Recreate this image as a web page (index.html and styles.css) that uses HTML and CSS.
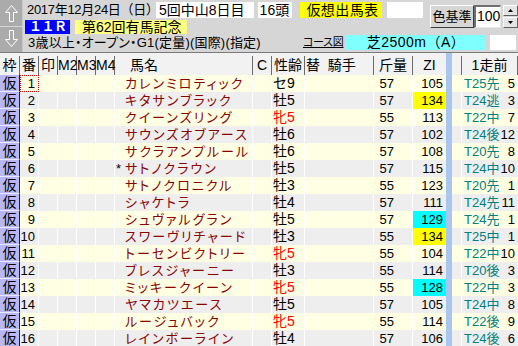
FILE: index.html
```html
<!DOCTYPE html>
<html lang="ja">
<head>
<meta charset="utf-8">
<link rel="stylesheet" href="styles.css">
</head>
<body>
<div class="top">
  <div class="arrows">
    <div class="arrow-btn"><svg width="22" height="26" viewBox="0 0 22 26"><path d="M11.5 5.5 L5.5 12.5 L9.5 12.5 L9.5 21.5 L13.5 21.5 L13.5 12.5 L17.5 12.5 Z" fill="none" stroke="#fff" stroke-width="1"/></svg></div>
    <div class="arrow-btn"><svg width="22" height="25" viewBox="0 0 22 25"><path d="M11.5 19.5 L5.5 12.5 L9.5 12.5 L9.5 3.5 L13.5 3.5 L13.5 12.5 L17.5 12.5 Z" fill="none" stroke="#fff" stroke-width="1"/></svg></div>
  </div>
  <div class="info">
    <div class="upper">
      <div class="rows12">
        <div class="row1">
          <span class="date">2017年12月24日（日）</span>
          <span class="box kai">5回中山8日目</span>
          <span class="box heads">16頭</span>
          <span class="box yellow">仮想出馬表</span>
          <span class="box blank"></span>
        </div>
        <div class="row2">
          <span class="race-no">１１Ｒ</span>
          <span class="race-name">第62回有馬記念</span>
        </div>
      </div>
      <div class="color-group">
        <span class="btn">色基準</span>
        <span class="num-input">100</span>
        <span class="spin"><span class="sp"><svg width="5" height="3" viewBox="0 0 5 3"><path d="M0 3 L2.5 0 L5 3 Z" fill="#000"/></svg></span><span class="sp"><svg width="5" height="3" viewBox="0 0 5 3"><path d="M0 0 L2.5 3 L5 0 Z" fill="#000"/></svg></span></span>
      </div>
    </div>
    <div class="row3">
      <span class="cond">3歳以上・オープン・G1(定量)(国際)(指定)</span>
      <span class="course-link">コース図</span>
      <span class="course">芝2500m（A）</span>
      <span class="box blank2"></span>
    </div>
  </div>
</div>
<div class="table">
  <div class="hrow">
    <div class="h">枠</div><div class="h">番</div><div class="h">印</div><div class="h">M2</div><div class="h">M3</div><div class="h">M4</div><div class="h name-h">馬名</div><div class="h">C</div><div class="h">性齢</div><div class="h jockey-h">替&nbsp;&nbsp;騎手</div><div class="h">斤量</div><div class="h noline">ZI</div><div class="bar"></div><div class="h"></div><div class="h">1走前</div>
  </div>
  <div class="row odd"><div class="waku">仮</div><div class="c num focus">1</div><div class="c"></div><div class="c"></div><div class="c"></div><div class="c"></div><div class="c name">カレンミロティック</div><div class="c"></div><div class="c sa">セ9</div><div class="c"></div><div class="c kin">57</div><div class="c zi">105</div><div class="bar"></div><div class="c"></div><div class="c prev"><span class="pt">T25先</span><span>5</span></div></div>
  <div class="row even"><div class="waku">仮</div><div class="c num">2</div><div class="c"></div><div class="c"></div><div class="c"></div><div class="c"></div><div class="c name">キタサンブラック</div><div class="c"></div><div class="c sa">牡5</div><div class="c"></div><div class="c kin">57</div><div class="c zi yel">134</div><div class="bar"></div><div class="c"></div><div class="c prev"><span class="pt">T24逃</span><span>3</span></div></div>
  <div class="row odd"><div class="waku">仮</div><div class="c num">3</div><div class="c"></div><div class="c"></div><div class="c"></div><div class="c"></div><div class="c name">クイーンズリング</div><div class="c"></div><div class="c sa mare">牝5</div><div class="c"></div><div class="c kin">55</div><div class="c zi">113</div><div class="bar"></div><div class="c"></div><div class="c prev"><span class="pt">T22中</span><span>7</span></div></div>
  <div class="row even"><div class="waku">仮</div><div class="c num">4</div><div class="c"></div><div class="c"></div><div class="c"></div><div class="c"></div><div class="c name">サウンズオブアース</div><div class="c"></div><div class="c sa">牡6</div><div class="c"></div><div class="c kin">57</div><div class="c zi">102</div><div class="bar"></div><div class="c"></div><div class="c prev"><span class="pt">T24後</span><span>12</span></div></div>
  <div class="row odd"><div class="waku">仮</div><div class="c num">5</div><div class="c"></div><div class="c"></div><div class="c"></div><div class="c"></div><div class="c name">サクラアンプルール</div><div class="c"></div><div class="c sa">牡6</div><div class="c"></div><div class="c kin">57</div><div class="c zi">108</div><div class="bar"></div><div class="c"></div><div class="c prev"><span class="pt">T20先</span><span>8</span></div></div>
  <div class="row even"><div class="waku">仮</div><div class="c num">6</div><div class="c"></div><div class="c"></div><div class="c"></div><div class="c"></div><div class="c name"><span class="mark">*</span>サトノクラウン</div><div class="c"></div><div class="c sa">牡5</div><div class="c"></div><div class="c kin">57</div><div class="c zi">115</div><div class="bar"></div><div class="c"></div><div class="c prev"><span class="pt">T24中</span><span>10</span></div></div>
  <div class="row odd"><div class="waku">仮</div><div class="c num">7</div><div class="c"></div><div class="c"></div><div class="c"></div><div class="c"></div><div class="c name">サトノクロニクル</div><div class="c"></div><div class="c sa">牡3</div><div class="c"></div><div class="c kin">55</div><div class="c zi">123</div><div class="bar"></div><div class="c"></div><div class="c prev"><span class="pt">T20先</span><span>1</span></div></div>
  <div class="row even"><div class="waku">仮</div><div class="c num">8</div><div class="c"></div><div class="c"></div><div class="c"></div><div class="c"></div><div class="c name">シャケトラ</div><div class="c"></div><div class="c sa">牡4</div><div class="c"></div><div class="c kin">57</div><div class="c zi">111</div><div class="bar"></div><div class="c"></div><div class="c prev"><span class="pt">T24先</span><span>11</span></div></div>
  <div class="row odd"><div class="waku">仮</div><div class="c num">9</div><div class="c"></div><div class="c"></div><div class="c"></div><div class="c"></div><div class="c name">シュヴァルグラン</div><div class="c"></div><div class="c sa">牡5</div><div class="c"></div><div class="c kin">57</div><div class="c zi cya">129</div><div class="bar"></div><div class="c"></div><div class="c prev"><span class="pt">T24先</span><span>1</span></div></div>
  <div class="row even"><div class="waku">仮</div><div class="c num">10</div><div class="c"></div><div class="c"></div><div class="c"></div><div class="c"></div><div class="c name">スワーヴリチャード</div><div class="c"></div><div class="c sa">牡3</div><div class="c"></div><div class="c kin">55</div><div class="c zi yel">134</div><div class="bar"></div><div class="c"></div><div class="c prev"><span class="pt">T25中</span><span>1</span></div></div>
  <div class="row odd"><div class="waku">仮</div><div class="c num">11</div><div class="c"></div><div class="c"></div><div class="c"></div><div class="c"></div><div class="c name">トーセンビクトリー</div><div class="c"></div><div class="c sa mare">牝5</div><div class="c"></div><div class="c kin">55</div><div class="c zi">104</div><div class="bar"></div><div class="c"></div><div class="c prev"><span class="pt">T22中</span><span>10</span></div></div>
  <div class="row even"><div class="waku">仮</div><div class="c num">12</div><div class="c"></div><div class="c"></div><div class="c"></div><div class="c"></div><div class="c name">ブレスジャーニー</div><div class="c"></div><div class="c sa">牡3</div><div class="c"></div><div class="c kin">55</div><div class="c zi">114</div><div class="bar"></div><div class="c"></div><div class="c prev"><span class="pt">T20後</span><span>3</span></div></div>
  <div class="row odd"><div class="waku">仮</div><div class="c num">13</div><div class="c"></div><div class="c"></div><div class="c"></div><div class="c"></div><div class="c name">ミッキークイーン</div><div class="c"></div><div class="c sa mare">牝5</div><div class="c"></div><div class="c kin">55</div><div class="c zi cya">128</div><div class="bar"></div><div class="c"></div><div class="c prev"><span class="pt">T22中</span><span>3</span></div></div>
  <div class="row even"><div class="waku">仮</div><div class="c num">14</div><div class="c"></div><div class="c"></div><div class="c"></div><div class="c"></div><div class="c name">ヤマカツエース</div><div class="c"></div><div class="c sa">牡5</div><div class="c"></div><div class="c kin">57</div><div class="c zi">105</div><div class="bar"></div><div class="c"></div><div class="c prev"><span class="pt">T24中</span><span>8</span></div></div>
  <div class="row odd"><div class="waku">仮</div><div class="c num">15</div><div class="c"></div><div class="c"></div><div class="c"></div><div class="c"></div><div class="c name">ルージュバック</div><div class="c"></div><div class="c sa mare">牝5</div><div class="c"></div><div class="c kin">55</div><div class="c zi">114</div><div class="bar"></div><div class="c"></div><div class="c prev"><span class="pt">T22後</span><span>9</span></div></div>
  <div class="row even"><div class="waku">仮</div><div class="c num">16</div><div class="c"></div><div class="c"></div><div class="c"></div><div class="c"></div><div class="c name">レインボーライン</div><div class="c"></div><div class="c sa">牡4</div><div class="c"></div><div class="c kin">57</div><div class="c zi">106</div><div class="bar"></div><div class="c"></div><div class="c prev"><span class="pt">T24後</span><span>6</span></div></div>
</div>
</body>
</html>
```
FILE: styles.css
```css
* { box-sizing: border-box; }
html, body { margin: 0; padding: 0; }
body {
  width: 518px;
  height: 346px;
  overflow: hidden;
  background: #ffffff;
  font-family: "Liberation Sans", "Noto Sans CJK JP", sans-serif;
  color: #000;
}

/* ---------- top info panel ---------- */
.top {
  display: flex;
  height: 53px;
  background: #d6d6d6;
  border-bottom: 1px solid #7a7a7a;
}
.arrows {
  width: 23px;
  display: flex;
  flex-direction: column;
  gap: 1px;
}
.arrow-btn {
  background: #ababab;
  border-right: 1px solid #c8c8c8;
  height: 26px;
  display: flex;
}
.arrow-btn + .arrow-btn { height: 25px; }
.info {
  flex: 1;
  display: flex;
  flex-direction: column;
}
.upper {
  display: flex;
  height: 34px;
}
.rows12 {
  width: 400px;
  display: flex;
  flex-direction: column;
}
.row1 {
  display: flex;
  margin-top: 2px;
  height: 16px;
  font-size: 14px;
  line-height: 16px;
}
.date {
  width: 132px;
  padding-left: 4px;
  font-size: 13px;
  letter-spacing: -0.3px;
  white-space: nowrap;
}
.box {
  background: #ffffff;
  white-space: nowrap;
}
.kai { width: 98px; padding-left: 3px; margin-left: 1px; }
.heads { width: 35px; margin-left: 4px; padding-left: 2px; }
.yellow { width: 82px; margin-left: 8px; background: #ffff00; padding-left: 6px; letter-spacing: 0.4px; }
.blank { width: 36px; margin-left: 5px; }

.row2 {
  display: flex;
  margin-top: 2px;
  height: 14px;
}
.race-no {
  width: 45px;
  margin-left: 2px;
  background: #0000ff;
  color: #ffffff;
  font-size: 13px;
  font-weight: bold;
  line-height: 14px;
  padding-left: 4px;
  letter-spacing: -0.5px;
}
.race-name {
  width: 112px;
  margin-left: 5px;
  background: #ffff80;
  font-size: 14px;
  line-height: 14px;
  padding-left: 7px;
}
.color-group {
  display: flex;
  margin-top: 5px;
  margin-left: 7px;
  height: 23px;
}
.btn {
  width: 44px;
  font-size: 13px;
  line-height: 21px;
  text-align: center;
  border-top: 1px solid #ffffff;
  border-left: 1px solid #ffffff;
  border-right: 1px solid #404040;
  border-bottom: 1px solid #404040;
  background: #d6d6d6;
}
.num-input {
  width: 27px;
  background: #ffffff;
  border-top: 2px solid #707070;
  border-left: 2px solid #707070;
  border-right: 1px solid #e8e8e8;
  border-bottom: 1px solid #e8e8e8;
  font-size: 14px;
  line-height: 19px;
  padding-left: 1px;
}
.spin {
  width: 15px;
  margin-left: 2px;
  display: flex;
  flex-direction: column;
  gap: 1px;
}
.sp {
  flex: 1;
  display: flex;
  align-items: center;
  justify-content: center;
  background: #e4e4e4;
  border-top: 1px solid #ffffff;
  border-left: 1px solid #ffffff;
  border-right: 1px solid #606060;
  border-bottom: 1px solid #606060;
}
.row3 {
  display: flex;
  margin-top: 1px;
  height: 15px;
  font-size: 13px;
  line-height: 15px;
}
.cond {
  width: 280px;
  padding-left: 5px;
  white-space: nowrap;
  font-feature-settings: "palt";
  letter-spacing: 0.2px;
}
.course-link {
  width: 38px;
  text-decoration: underline;
  font-size: 11px;
  font-feature-settings: "palt";
  letter-spacing: -0.3px;
  white-space: nowrap;
}
.course {
  width: 140px;
  margin-left: 5px;
  background: #80ffff;
  text-align: center;
  font-size: 14px;
  letter-spacing: 0.5px;
}
.blank2 { width: 26px; margin-left: 4px; }

/* ---------- table ---------- */
.hrow, .row {
  display: grid;
  grid-template-columns: 20px 19px 19px 19px 19px 19px 138px 19px 33px 69px 39px 33px 6px 10px 56px;
}
.hrow {
  height: 22px;
  background: #f2f2f2;
}
.h {
  border-right: 1px solid #6a6a6a;
  margin-top: 3px;
  font-size: 14px;
  line-height: 19px;
  text-align: center;
  white-space: nowrap;
}
.h.noline { border-right: none; }
.h.name-h { text-align: left; padding-left: 15px; }
.h.jockey-h { text-align: left; padding-left: 1px; }
.bar { background: #a8c6ee; }

.row {
  height: 17px;
  font-size: 14px;
  line-height: 17px;
}
.waku {
  background: #b8b8f8;
  border-right: 1px solid #1c1c50;
  border-bottom: 1px solid #e8e8ff;
  text-align: center;
  font-size: 14px;
  line-height: 16px;
}
.c {
  border-right: 1px solid #ffffff;
  white-space: nowrap;
}
.odd .c { background: #ffffe3; }
.even .c { background: #eeeeee; }
.num { text-align: right; padding-right: 3px; font-size: 13px; }
.focus { outline: 1px dotted #c00000; outline-offset: -1px; }
.name {
  color: #8a0000;
  padding-left: 10px;
  font-size: 13px;
  letter-spacing: 2px;
  font-feature-settings: "palt";
}
.mark {
  display: inline-block;
  width: 9px;
  margin-left: -9px;
  color: #000;
  letter-spacing: 0;
}
.sa { padding-left: 1px; }
.mare { color: #ff0000; }
.kin { text-align: right; padding-right: 18px; font-size: 13px; }
.zi { text-align: right; padding-right: 3px; border-right: none; font-size: 13px; }
.odd .zi.yel, .even .zi.yel { background: #ffff00; }
.odd .zi.cya, .even .zi.cya { background: #00ffff; }
.prev {
  display: flex;
  justify-content: space-between;
  padding: 0 3px 0 2px;
  border-right: none;
  font-size: 13px;
}
.pt { color: #008080; }
```
